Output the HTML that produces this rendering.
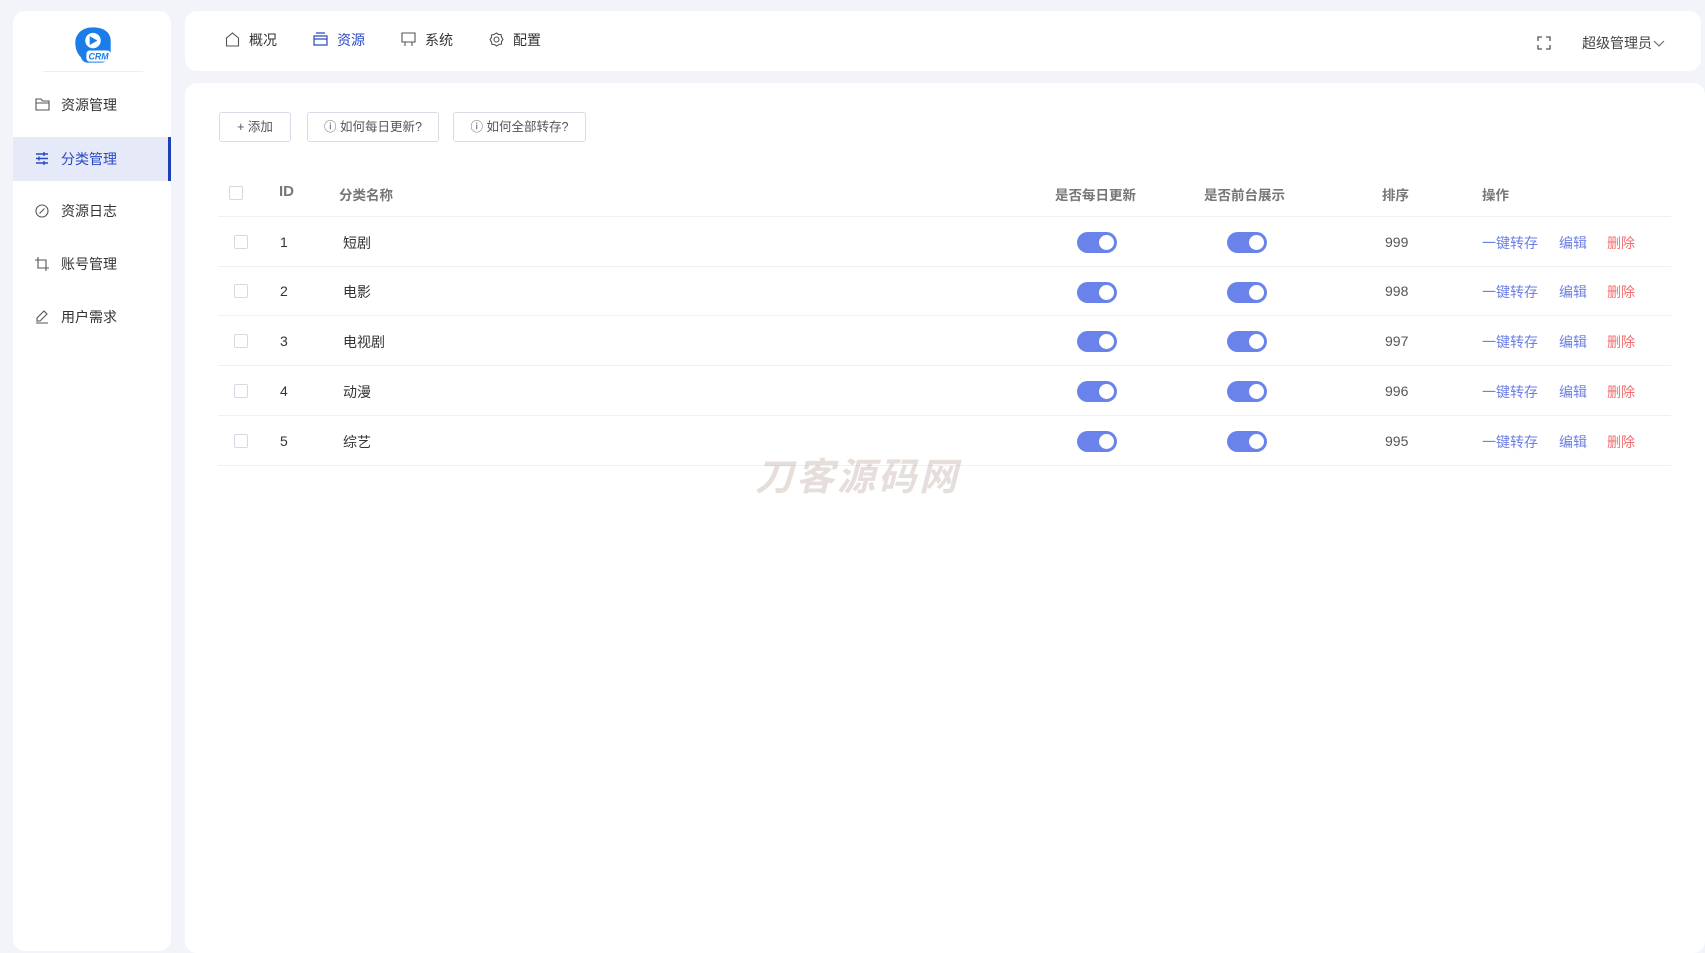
<!DOCTYPE html>
<html><head><meta charset="utf-8"><style>
*{margin:0;padding:0;box-sizing:border-box}
body{width:1705px;height:932px;background:#f3f4f9;font-family:"Liberation Sans","Noto Sans CJK SC",sans-serif;font-size:14px;color:#333;position:relative;overflow:hidden}
.abs{position:absolute}
.side{left:13px;top:11px;width:158px;height:940px;background:#fff;border-radius:12px}
.hdr{left:185px;top:11px;width:1516px;height:60px;background:#fff;border-radius:12px}
.main{left:185px;top:83px;width:1520px;height:870px;background:#fff;border-radius:12px}
.mi{position:absolute;left:0;width:158px;height:44px;line-height:44px;padding-left:48px;color:#333;font-size:14px}
.mi svg{position:absolute;left:22px;top:15px}
.act{background:#e6e9f7;color:#2a48c4}
.act:after{content:"";position:absolute;right:0;top:0;width:3px;height:44px;background:#1f3fb9}
.nav{position:absolute;top:30px;font-size:14px;color:#333}
.nav svg{position:absolute;left:-24px;top:2px}
.btn{position:absolute;top:112px;height:30px;border:1px solid #d9dce6;border-radius:3px;line-height:28px;font-size:12.5px;color:#555;text-align:center}
.cell{position:absolute;font-size:14px}
.th{color:#777;font-weight:bold;font-size:13.5px}
.line{position:absolute;left:218px;width:1453px;height:1px;background:#eef0f4}
.cb{position:absolute;width:14px;height:14px;border:1px solid #d6d9e3;border-radius:2px;background:#fff}
.tg{position:absolute;width:40px;height:21px;border-radius:11px;background:#6a83ea}
.tg:after{content:"";position:absolute;right:3px;top:3px;width:15px;height:15px;border-radius:50%;background:#fff}
.lk{color:#6b7fe6}.del{color:#f56c6c}
.n{color:#555}
</style></head><body>
<div class="abs side">
  <svg class="abs" style="left:59px;top:14px" width="42" height="40" viewBox="0 0 38 36"><path d="M19 2C9 2 3 8 3 16c0 6 2 10 5 13 1 3 3 5 6 5h12c6 0 9-4 9-10V14C35 6 28 2 19 2z" fill="#1b7de8"/><circle cx="19" cy="14" r="7" fill="#fff"/><path d="M16 10l7 4-7 4z" fill="#1b7de8"/><rect x="13" y="23" width="22" height="10" rx="3" fill="#fff"/><text x="24" y="31" font-size="8" font-weight="bold" font-style="italic" fill="#1b7de8" text-anchor="middle" font-family="Liberation Sans">CRM</text></svg>
  <div class="abs" style="left:30px;top:60px;width:100px;height:1px;background:#eceef3"></div>
  <div class="mi" style="top:72px"><svg width="15" height="13" viewBox="0 0 15 13" fill="none" stroke="#555" stroke-width="1.1"><path d="M1 1h5l1.5 2H14v9H1z M1 5h13"/></svg>资源管理</div>
  <div class="mi act" style="top:126px"><svg width="14" height="13" viewBox="0 0 14 13" fill="none" stroke="#2a48c4" stroke-width="1.4"><path d="M1 2h12M1 6.5h12M1 11h12M9 0v4M4 4.5v4M9 9v4"/></svg>分类管理</div>
  <div class="mi" style="top:178px"><svg width="14" height="14" viewBox="0 0 14 14" fill="none" stroke="#555" stroke-width="1.1"><circle cx="7" cy="7" r="6"/><path d="M9.5 4.5L6 8l-1.5 1.5"/></svg>资源日志</div>
  <div class="mi" style="top:231px"><svg width="14" height="14" viewBox="0 0 14 14" fill="none" stroke="#555" stroke-width="1.1"><path d="M3 0v11h11M0 3h11v11"/></svg>账号管理</div>
  <div class="mi" style="top:284px"><svg width="14" height="14" viewBox="0 0 14 14" fill="none" stroke="#555" stroke-width="1.1"><path d="M9 1l3 3-7 7H2v-3z M1 13h12"/></svg>用户需求</div>
</div>
<div class="abs hdr"></div>
<div class="nav" style="left:249px"><svg width="15" height="15" viewBox="0 0 15 15" fill="none" stroke="#555" stroke-width="1.1"><path d="M1.5 14V6L7.5 1l6 5v8z"/></svg>概况</div>
<div class="nav" style="left:337px;color:#2a48c4"><svg width="15" height="14" viewBox="0 0 15 14" fill="none" stroke="#2a48c4" stroke-width="1.2"><path d="M3 1h9M1 4h13v9H1z M1 7h13"/></svg>资源</div>
<div class="nav" style="left:425px"><svg width="15" height="15" viewBox="0 0 15 15" fill="none" stroke="#555" stroke-width="1.1"><path d="M1 1h13v9H1z M4 10v4M11 10v4"/></svg>系统</div>
<div class="nav" style="left:513px"><svg width="15" height="15" viewBox="0 0 15 15" fill="none" stroke="#555" stroke-width="1.1"><circle cx="7.5" cy="7.5" r="2.5"/><path d="M7.5 1l2 1.5 2.5 0 .5 2.5L14 7.5l-1.5 2 0 2.5-2.5.5L7.5 14l-2-1.5-2.5 0-.5-2.5L1 7.5l1.5-2 0-2.5 2.5-.5z"/></svg>配置</div>
<svg class="abs" style="left:1537px;top:36px" width="14" height="14" viewBox="0 0 14 14" fill="none" stroke="#555" stroke-width="1.3"><path d="M1 5V1h4M9 1h4v4M13 9v4H9M5 13H1V9"/></svg>
<div class="abs" style="left:1582px;top:33px;font-size:14px;color:#444">超级管理员<svg width="12" height="8" viewBox="0 0 12 8" fill="none" stroke="#666" stroke-width="1.1" style="margin-left:1px"><path d="M1 1l5 5 5-5"/></svg></div>
<div class="abs main"></div>
<div class="btn" style="left:219px;width:72px">+ 添加</div>
<div class="btn" style="left:307px;width:132px">ⓘ 如何每日更新?</div>
<div class="btn" style="left:453px;width:133px">ⓘ 如何全部转存?</div>
<div class="cb" style="left:229px;top:186px"></div>
<div class="cell th" style="left:279px;top:183px;font-size:15px">ID</div>
<div class="cell th" style="left:339px;top:184px">分类名称</div>
<div class="cell th" style="left:1055px;top:184px">是否每日更新</div>
<div class="cell th" style="left:1204px;top:184px">是否前台展示</div>
<div class="cell th" style="left:1382px;top:184px">排序</div>
<div class="cell th" style="left:1482px;top:184px">操作</div>
<div class="line" style="top:216px"></div>
<div class="cb" style="left:234px;top:235px"></div><div class="cell" style="left:280px;top:234px">1</div><div class="cell" style="left:343px;top:233px">短剧</div><div class="tg" style="left:1077px;top:232px"></div><div class="tg" style="left:1227px;top:232px"></div><div class="cell n" style="left:1385px;top:234px">999</div><div class="cell lk" style="left:1482px;top:233px">一键转存</div><div class="cell lk" style="left:1559px;top:233px">编辑</div><div class="cell del" style="left:1607px;top:233px">删除</div>
<div class="line" style="top:266px"></div>
<div class="cb" style="left:234px;top:284px"></div><div class="cell" style="left:280px;top:283px">2</div><div class="cell" style="left:343px;top:282px">电影</div><div class="tg" style="left:1077px;top:282px"></div><div class="tg" style="left:1227px;top:282px"></div><div class="cell n" style="left:1385px;top:283px">998</div><div class="cell lk" style="left:1482px;top:282px">一键转存</div><div class="cell lk" style="left:1559px;top:282px">编辑</div><div class="cell del" style="left:1607px;top:282px">删除</div>
<div class="line" style="top:315px"></div>
<div class="cb" style="left:234px;top:334px"></div><div class="cell" style="left:280px;top:333px">3</div><div class="cell" style="left:343px;top:332px">电视剧</div><div class="tg" style="left:1077px;top:331px"></div><div class="tg" style="left:1227px;top:331px"></div><div class="cell n" style="left:1385px;top:333px">997</div><div class="cell lk" style="left:1482px;top:332px">一键转存</div><div class="cell lk" style="left:1559px;top:332px">编辑</div><div class="cell del" style="left:1607px;top:332px">删除</div>
<div class="line" style="top:365px"></div>
<div class="cb" style="left:234px;top:384px"></div><div class="cell" style="left:280px;top:383px">4</div><div class="cell" style="left:343px;top:382px">动漫</div><div class="tg" style="left:1077px;top:381px"></div><div class="tg" style="left:1227px;top:381px"></div><div class="cell n" style="left:1385px;top:383px">996</div><div class="cell lk" style="left:1482px;top:382px">一键转存</div><div class="cell lk" style="left:1559px;top:382px">编辑</div><div class="cell del" style="left:1607px;top:382px">删除</div>
<div class="line" style="top:415px"></div>
<div class="cb" style="left:234px;top:434px"></div><div class="cell" style="left:280px;top:433px">5</div><div class="cell" style="left:343px;top:432px">综艺</div><div class="tg" style="left:1077px;top:431px"></div><div class="tg" style="left:1227px;top:431px"></div><div class="cell n" style="left:1385px;top:433px">995</div><div class="cell lk" style="left:1482px;top:432px">一键转存</div><div class="cell lk" style="left:1559px;top:432px">编辑</div><div class="cell del" style="left:1607px;top:432px">删除</div>
<div class="line" style="top:465px"></div>
<div class="abs" style="left:755px;top:446px;font-size:38px;font-weight:bold;font-style:italic;color:rgba(180,160,150,.35);letter-spacing:3px">刀客源码网</div>
</body></html>
